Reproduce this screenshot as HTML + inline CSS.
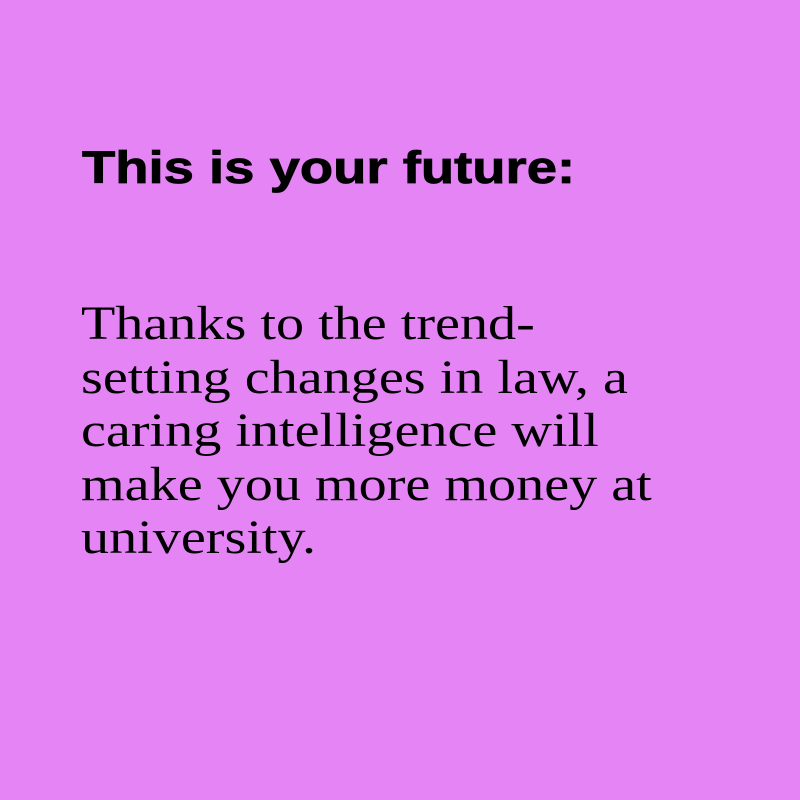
<!DOCTYPE html>
<html><head><style>
html,body{margin:0;padding:0;width:800px;height:800px;background:#e584f5;overflow:hidden}
.h{position:absolute;left:82px;top:145px;font:bold 45px/45px "Liberation Sans",sans-serif;color:#000;white-space:nowrap;transform:scaleX(1.21);transform-origin:0 0;-webkit-text-stroke:0.8px #000}
.b{position:absolute;left:81px;top:297px;font:48px/53.5px "Liberation Serif",serif;color:#000;white-space:nowrap;transform:scaleX(1.17);transform-origin:0 0}
</style></head><body>
<div class="h">This is your future:</div>
<div class="b">Thanks to the trend-<br>setting changes in law, a<br>caring intelligence will<br>make you more money at<br>university.</div>
</body></html>
